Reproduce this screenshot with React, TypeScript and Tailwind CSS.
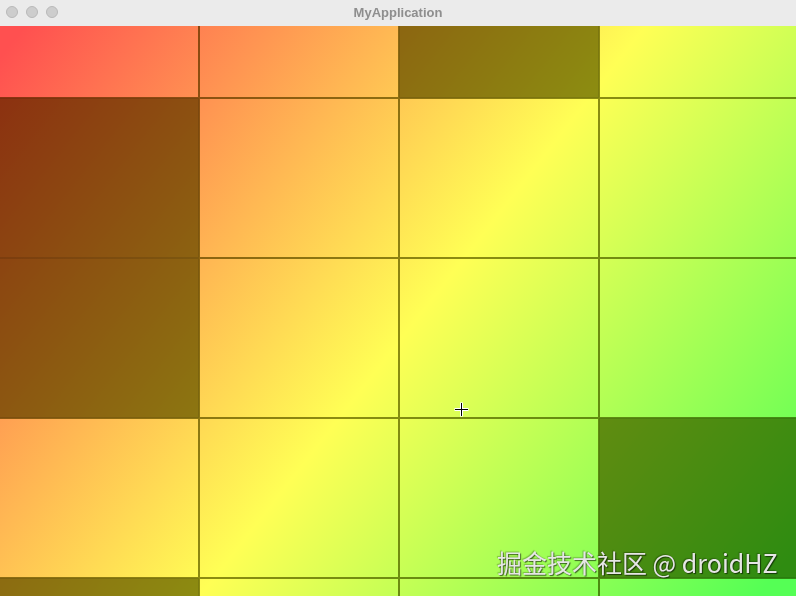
const rows: boolean[][] = [
  [false, false, true, false],
  [true, false, false, false],
  [true, false, false, false],
  [false, false, false, true],
  [true, false, false, false],
];

function TitleBar() {
  return (
    <div className="h-[26px] shrink-0 relative flex items-center justify-center bg-[#ebebeb]">
      <div className="absolute left-[6px] top-[6px] flex gap-[8px]">
        <span className="w-[12px] h-[12px] rounded-full bg-[#cdcdcd] border border-[#b9b9b9]" />
        <span className="w-[12px] h-[12px] rounded-full bg-[#cdcdcd] border border-[#b9b9b9]" />
        <span className="w-[12px] h-[12px] rounded-full bg-[#cdcdcd] border border-[#b9b9b9]" />
      </div>
      <span className="text-[13px] font-bold text-[#8e8e8e] font-['Liberation_Sans',sans-serif]">
        MyApplication
      </span>
    </div>
  );
}

function Tile({ dark }: { dark: boolean }) {
  return (
    <div
      className={
        dark
          ? "h-[160px] border border-[#7c7c2c] bg-[#8c8c33] mix-blend-multiply"
          : "h-[160px] border border-[#8c8c33] mix-blend-multiply"
      }
    />
  );
}

export default function App() {
  return (
    <div className="w-[796px] h-[596px] flex flex-col overflow-hidden bg-white">
      <TitleBar />
      <div className="flex-1 relative overflow-hidden bg-[linear-gradient(128deg,#ff5050_2%,#ffff55_52%,#55ff55_97%)]">
        <div className="w-[800px] -mt-[88px] -ml-px grid grid-cols-[repeat(4,200px)]">
          {rows.map((row, r) =>
            row.map((dark, c) => <Tile key={r + "-" + c} dark={dark} />)
          )}
        </div>

        {/* watermark */}
        <div className="absolute left-[497px] top-[524px] whitespace-nowrap text-[25px] leading-none text-[#e6e6e6] [text-shadow:1px_1px_1px_rgba(0,0,0,0.6),-1px_-1px_1px_rgba(0,0,0,0.25)] font-['Noto_Sans_CJK_SC','Noto_Sans',sans-serif]">
          掘金技术社区 @ droidHZ
        </div>

        {/* crosshair cursor */}
        <svg className="absolute left-[454px] top-[376px]" width="15" height="15" viewBox="0 0 15 15">
          <path d="M7.5 0.5v14M0.5 7.5h14" stroke="#fff" strokeWidth="3" />
          <path d="M7.5 1v13M1 7.5h13" stroke="#000" strokeWidth="1" />
        </svg>
      </div>
    </div>
  );
}
